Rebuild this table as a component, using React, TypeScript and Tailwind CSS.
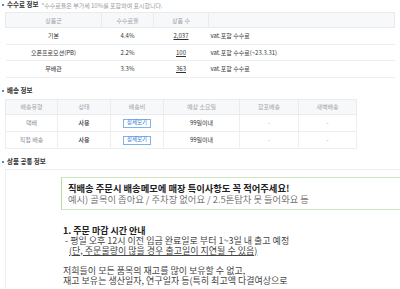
const th = "border border-[#e9ebef] bg-[#f7f8fa] font-normal text-[#a0a4ab]";
const td = "border-b border-[#eceef1]";

function Title({ text, note }: { text: string; note?: string }) {
  return (
    <div className="flex items-center h-[10px] pl-[2px] gap-[3px]">
      <span className="w-[2px] h-[2px] bg-[#4a90e2]" />
      <span className="text-[6.5px] font-bold text-[#333]">{text}</span>
      {note && <span className="text-[6px] text-[#9a9a9a]">{note}</span>}
    </div>
  );
}

function DetailButton() {
  return (
    <span className="inline-flex items-center justify-center w-[28px] h-[9px] border border-[#7fb2ea] text-[5.5px] text-[#3a7bd5] leading-none">
      상세보기
    </span>
  );
}

const fees = [
  { group: "기본", rate: "4.4%", count: "2,037", note: "vat.포함 수수료" },
  { group: "오픈프로모션(PB)", rate: "2.2%", count: "100", note: "vat.포함 수수료(~23.3.31)" },
  { group: "무배관", rate: "3.3%", count: "363", note: "vat.포함 수수료" },
];

const shipping = [
  { type: "택배", status: "사용", days: "99일이내" },
  { type: "직접 배송", status: "사용", days: "99일이내" },
];

export default function App() {
  return (
    <div
      className="w-[400px] h-[289px] overflow-hidden bg-white text-[#333]"
      style={{ fontFamily: '"Noto Sans CJK KR", "Noto Sans", sans-serif' }}
    >
      <Title text="수수료 정보" note="*수수료율은 부가세 10%를 포함하여 표시합니다." />

      <table className="ml-[5px] mt-[2px] w-[390px] table-fixed border-collapse text-[6px]">
        <colgroup>
          <col className="w-[96px]" />
          <col className="w-[52px]" />
          <col className="w-[55px]" />
          <col />
        </colgroup>
        <thead>
          <tr className="h-[15px]">
            <th className={th}>상품군</th>
            <th className={th}>수수료율</th>
            <th className={th}>상품 수</th>
            <th className={th}></th>
          </tr>
        </thead>
        <tbody>
          {fees.map((f) => (
            <tr key={f.group} className="h-[16.5px]">
              <td className={`${td} text-center`}>{f.group}</td>
              <td className={`${td} text-center`}>{f.rate}</td>
              <td className={`${td} text-center`}>
                <span className="underline">{f.count}</span>
              </td>
              <td className={`${td} pl-[2px]`}>{f.note}</td>
            </tr>
          ))}
        </tbody>
      </table>

      <div className="mt-[8px]">
        <Title text="배송 정보" />
      </div>

      <table className="ml-[5px] mt-[3px] w-[352px] table-fixed border-collapse text-[6px]">
        <colgroup>
          <col className="w-[52px]" />
          <col className="w-[53px]" />
          <col className="w-[53px]" />
          <col className="w-[76px]" />
          <col className="w-[59px]" />
          <col />
        </colgroup>
        <thead>
          <tr className="h-[15px]">
            <th className={th}>배송유형</th>
            <th className={th}>상태</th>
            <th className={th}>배송비</th>
            <th className={th}>예상 소요일</th>
            <th className={th}>합포배송</th>
            <th className={th}>새벽배송</th>
          </tr>
        </thead>
        <tbody>
          {shipping.map((s) => (
            <tr key={s.type} className="h-[17px] text-center">
              <td className="border border-[#eceef1] text-[#8a8f96]">{s.type}</td>
              <td className="border border-[#eceef1] font-medium text-[#333]">{s.status}</td>
              <td className="border border-[#eceef1]">
                <DetailButton />
              </td>
              <td className="border border-[#eceef1] text-[#333]">{s.days}</td>
              <td className="border border-[#eceef1] text-[#999]">-</td>
              <td className="border border-[#eceef1] text-[#999]">-</td>
            </tr>
          ))}
        </tbody>
      </table>

      <div className="mt-[8px]">
        <Title text="상품 공통 정보" />
      </div>

      <div className="ml-[5px] mt-[2px] flex border-t border-l border-[#eceef1] h-[200px]">
        <div className="w-[55px] shrink-0" />
        <div className="flex-1 pt-[7px]">
          <div className="h-[33px] border-y border-l border-[#cde6bf] border-l-[#b7dc9f] pl-[6px] pt-[5px] text-[9.3px] leading-[11px]">
            <div className="font-bold text-[#222] whitespace-nowrap">
              직배송 주문시 배송메모에 매장 특이사항도 꼭 적어주세요!
            </div>
            <div className="text-[#777] whitespace-nowrap">
              예시) 골목이 좁아요 / 주차장 없어요 / 2.5톤탑차 못 들어와요 등
            </div>
          </div>
          <div className="mt-[16px] pl-[2px] text-[9px] leading-[10px] text-[#444] whitespace-nowrap">
            <div className="font-bold text-[#222]">1. 주문 마감 시간 안내</div>
            <div className="pl-[2px]">- 평일 오후 12시 이전 입금 완료일로 부터 1~3일 내 출고 예정</div>
            <div className="pl-[6px] underline">(단, 주문물량이 많을 경우 출고일이 지연될 수 있음)</div>
            <div className="h-[10px]" />
            <div>저희들이 모든 품목의 재고를 많이 보유할 수 없고,</div>
            <div>재고 보유는 생산일자, 연구일자 등(특히 최고액 다결여상으로</div>
          </div>
        </div>
      </div>
    </div>
  );
}
